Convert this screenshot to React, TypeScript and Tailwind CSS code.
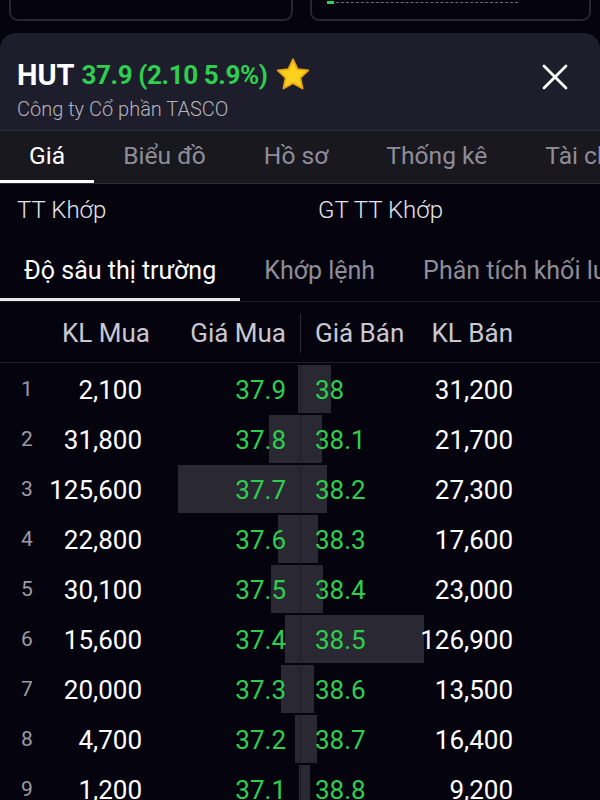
import { X } from "lucide-react";

type Level = {
  bidVol: number;
  bid: string;
  ask: string;
  askVol: number;
};

const levels: Level[] = [
  { bidVol: 2100, bid: "37.9", ask: "38", askVol: 31200 },
  { bidVol: 31800, bid: "37.8", ask: "38.1", askVol: 21700 },
  { bidVol: 125600, bid: "37.7", ask: "38.2", askVol: 27300 },
  { bidVol: 22800, bid: "37.6", ask: "38.3", askVol: 17600 },
  { bidVol: 30100, bid: "37.5", ask: "38.4", askVol: 23000 },
  { bidVol: 15600, bid: "37.4", ask: "38.5", askVol: 126900 },
  { bidVol: 20000, bid: "37.3", ask: "38.6", askVol: 13500 },
  { bidVol: 4700, bid: "37.2", ask: "38.7", askVol: 16400 },
  { bidVol: 1200, bid: "37.1", ask: "38.8", askVol: 9200 },
];

const maxVol = 126900;
const maxBar = 123;

const tabs = ["Giá", "Biểu đồ", "Hồ sơ", "Thống kê", "Tài chính"];
const subTabs = ["Độ sâu thị trường", "Khớp lệnh", "Phân tích khối lượng"];

const fmt = (n: number) => n.toLocaleString("en-US");

function Star() {
  return (
    <svg width="34" height="33" viewBox="2 2 20 20">
      <polygon
        points="12,2.8 14.8,8.7 21.3,9.5 16.5,14 17.8,20.5 12,17.3 6.2,20.5 7.5,14 2.7,9.5 9.2,8.7"
        fill="#fcd01e"
        stroke="#e6a612"
        strokeWidth="1.1"
        strokeLinejoin="round"
      />
    </svg>
  );
}

export default function App() {
  return (
    <div className="h-[800px] w-[600px] overflow-hidden bg-[#05040e] font-['Roboto',sans-serif]">
      {/* cards above, cut off */}
      <div className="flex h-[33px] gap-[17px] px-[9px]">
        <div className="h-[21px] w-[284px] rounded-b-[9px] border-x-2 border-b-2 border-[#272633]" />
        <div className="h-[21px] flex-1 rounded-b-[9px] border-x-2 border-b-2 border-[#272633]">
          <div className="flex items-center gap-[2px] pl-[15px] pt-[1px]">
            <div className="h-[3px] w-[7px] bg-[#2fd151]" />
            <div className="h-0 w-[182px] border-t border-dashed border-[#6d6c78]" />
          </div>
        </div>
      </div>

      {/* bottom sheet */}
      <div className="rounded-t-[16px] bg-[#1e1d2b]">
        <div className="flex h-[98px] items-start justify-between border-b border-[#2d2c3a] pl-[17px] pr-[23px] pt-[24px]">
          <div>
            <div className="flex items-center">
              <span className="text-[29px] font-bold leading-[36px] text-white">HUT</span>
              <span className="ml-[7px] text-[26px] font-bold leading-[36px] tracking-[-0.4px] text-[#2ecf4e]">
                37.9 (2.10 5.9%)
              </span>
              <span className="ml-[9px] mt-[-2px]">
                <Star />
              </span>
            </div>
            <div className="mt-[3px] text-[20px] font-light leading-[26px] text-[#b5b4bd]">
              Công ty Cổ phần TASCO
            </div>
          </div>
          <X className="mt-[-2px] text-white" size={44} strokeWidth={1.5} />
        </div>

        {/* main tabs */}
        <div className="flex h-[53px] overflow-hidden whitespace-nowrap border-b border-[#2d2c3a] bg-[#19181f]">
          {tabs.map((t, i) => (
            <div
              key={t}
              className={
                i === 0
                  ? "flex flex-col justify-between px-[29px] text-[24.6px] text-white"
                  : "flex flex-col justify-between px-[29px] text-[24.6px] text-[#8e8d98]"
              }
            >
              <span className="pt-[10px] leading-[30px]">{t}</span>
              {i === 0 ? (
                <div className="-mx-[29px] h-[3px] bg-white" />
              ) : (
                <div className="h-[3px]" />
              )}
            </div>
          ))}
        </div>
      </div>

      {/* match info */}
      <div className="flex h-[52px] items-center text-[24px] font-light text-[#e6e6ea]">
        <span className="w-[318px] pl-[17px]">TT Khớp</span>
        <span>GT TT Khớp</span>
      </div>

      {/* sub tabs */}
      <div className="flex h-[66px] overflow-hidden whitespace-nowrap border-b border-[#1c1b27] pt-[6px]">
        {subTabs.map((t, i) => (
          <div
            key={t}
            className={
              i === 0
                ? "flex flex-col justify-between px-[24px] text-[25px] text-white"
                : "flex flex-col justify-between px-[24px] text-[25px] text-[#8e8d98]"
            }
          >
            <span className="pt-[14px] leading-[30px]">{t}</span>
            {i === 0 ? (
              <div className="-mx-[24px] h-[3px] bg-[#e8e8ec]" />
            ) : (
              <div className="h-[3px]" />
            )}
          </div>
        ))}
      </div>

      {/* column headers */}
      <div className="flex h-[61px] items-center border-b border-[#1f1e2a] pt-[3px] text-[26px] text-[#c9c8d0]">
        <div className="w-[38px]" />
        <div className="w-[112px] text-right">KL Mua</div>
        <div className="w-[136px] text-right">Giá Mua</div>
        <div className="w-[14px]" />
        <div className="h-[39px] w-px bg-[#2c2b38]" />
        <div className="w-[14px]" />
        <div className="w-[100px]">Giá Bán</div>
        <div className="w-[98px] text-right">KL Bán</div>
      </div>

      {/* order book */}
      {levels.map((l, i) => (
        <div key={i} className="grid h-[50px] grid-cols-[300px_1px_299px] pt-[2px]">
          <div className="col-start-1 row-start-1 flex justify-end">
            <div className="h-full bg-[#2a2933]" style={{ width: (l.bidVol / maxVol) * maxBar }} />
          </div>
          <div className="col-start-2 row-start-1 bg-[#1d1c28]" />
          <div className="col-start-3 row-start-1 flex">
            <div className="h-full bg-[#2a2933]" style={{ width: (l.askVol / maxVol) * maxBar }} />
          </div>
          <div className="col-span-3 col-start-1 row-start-1 flex items-center pt-[2px] text-[26px]">
            <div className="w-[38px] pl-[21px] text-[21px] text-[#9c9ba6]">{i + 1}</div>
            <div className="w-[104px] text-right text-white">{fmt(l.bidVol)}</div>
            <div className="w-[144px] text-right text-[#2ecf4e]">{l.bid}</div>
            <div className="w-[29px]" />
            <div className="w-[100px] text-[#2ecf4e]">{l.ask}</div>
            <div className="w-[98px] text-right text-white">{fmt(l.askVol)}</div>
          </div>
        </div>
      ))}
    </div>
  );
}
